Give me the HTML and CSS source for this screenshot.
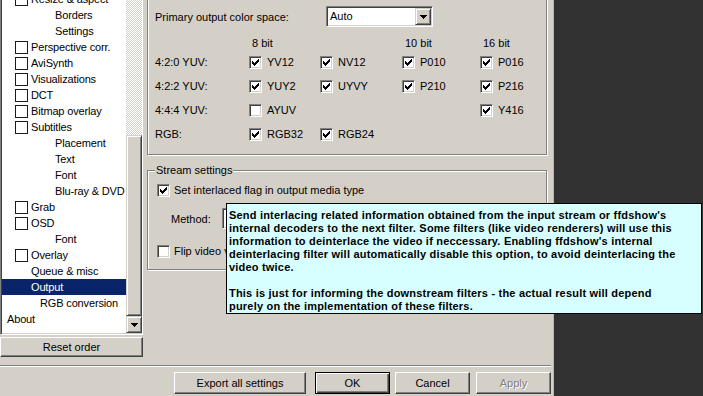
FILE: index.html
```html
<!DOCTYPE html>
<html lang="en">
<head>
    <meta charset="UTF-8">
    <meta name="viewport" content="width=device-width, initial-scale=1.0">
    <title>ffdshow video decoder configuration - Output</title>
    <link rel="stylesheet" href="styles.css">
</head>
<body>
    <div class="dialog">
        <div class="main">
            <div class="sidebar">
                <div class="tree">
                    <ul class="tree-list">
                        <li class="item check"><span class="box"></span>Resize &amp; aspect</li>
                        <li class="item sub">Borders</li>
                        <li class="item sub">Settings</li>
                        <li class="item check"><span class="box"></span>Perspective corr.</li>
                        <li class="item check"><span class="box"></span>AviSynth</li>
                        <li class="item check"><span class="box"></span>Visualizations</li>
                        <li class="item check"><span class="box"></span>DCT</li>
                        <li class="item check"><span class="box"></span>Bitmap overlay</li>
                        <li class="item check"><span class="box"></span>Subtitles</li>
                        <li class="item sub">Placement</li>
                        <li class="item sub">Text</li>
                        <li class="item sub">Font</li>
                        <li class="item sub">Blu-ray &amp; DVD</li>
                        <li class="item check"><span class="box"></span>Grab</li>
                        <li class="item check"><span class="box"></span>OSD</li>
                        <li class="item sub">Font</li>
                        <li class="item check"><span class="box"></span>Overlay</li>
                        <li class="item plain">Queue &amp; misc</li>
                        <li class="item plain selected">Output</li>
                        <li class="item sub2">RGB conversion</li>
                        <li class="item root">About</li>
                    </ul>
                    <div class="scrollbar">
                        <div class="track"><div class="thumb"></div></div>
                        <div class="arrow">
                            <svg width="7" height="4" viewBox="0 0 7 4" shape-rendering="crispEdges"><path d="M0 0h7v1h-1v1h-1v1h-1v1h-1v-1h-1v-1h-1v-1h-1z"/></svg>
                        </div>
                    </div>
                </div>
                <button class="btn reset">Reset order</button>
            </div>

            <div class="pages">
                <div class="group formats">
                    <div class="primary">
                        <span class="primary-label">Primary output color space:</span>
                        <div class="combo">
                            <span class="combo-text">Auto</span>
                            <span class="combo-btn">
                                <svg width="7" height="4" viewBox="0 0 7 4" shape-rendering="crispEdges"><path d="M0 0h7v1h-1v1h-1v1h-1v1h-1v-1h-1v-1h-1v-1h-1z"/></svg>
                            </span>
                        </div>
                    </div>

                    <div class="format-grid">
                        <span></span>
                        <span class="col-head">8 bit</span>
                        <span></span>
                        <span class="col-head">10 bit</span>
                        <span class="col-head">16 bit</span>

                        <span class="row-label">4:2:0 YUV:</span>
                        <label class="opt"><span class="cb"><svg class="tick" viewBox="0 0 7 7"><path d="M6 0h1v1h-1zM5 1h2v1h-2zM0 2h1v1h-1zM4 2h3v1h-3zM0 3h2v1h-2zM3 3h3v1h-3zM0 4h5v1h-5zM1 5h3v1h-3zM2 6h1v1h-1z"/></svg></span>YV12</label>
                        <label class="opt"><span class="cb"><svg class="tick" viewBox="0 0 7 7"><path d="M6 0h1v1h-1zM5 1h2v1h-2zM0 2h1v1h-1zM4 2h3v1h-3zM0 3h2v1h-2zM3 3h3v1h-3zM0 4h5v1h-5zM1 5h3v1h-3zM2 6h1v1h-1z"/></svg></span>NV12</label>
                        <label class="opt"><span class="cb"><svg class="tick" viewBox="0 0 7 7"><path d="M6 0h1v1h-1zM5 1h2v1h-2zM0 2h1v1h-1zM4 2h3v1h-3zM0 3h2v1h-2zM3 3h3v1h-3zM0 4h5v1h-5zM1 5h3v1h-3zM2 6h1v1h-1z"/></svg></span>P010</label>
                        <label class="opt"><span class="cb"><svg class="tick" viewBox="0 0 7 7"><path d="M6 0h1v1h-1zM5 1h2v1h-2zM0 2h1v1h-1zM4 2h3v1h-3zM0 3h2v1h-2zM3 3h3v1h-3zM0 4h5v1h-5zM1 5h3v1h-3zM2 6h1v1h-1z"/></svg></span>P016</label>

                        <span class="row-label">4:2:2 YUV:</span>
                        <label class="opt"><span class="cb"><svg class="tick" viewBox="0 0 7 7"><path d="M6 0h1v1h-1zM5 1h2v1h-2zM0 2h1v1h-1zM4 2h3v1h-3zM0 3h2v1h-2zM3 3h3v1h-3zM0 4h5v1h-5zM1 5h3v1h-3zM2 6h1v1h-1z"/></svg></span>YUY2</label>
                        <label class="opt"><span class="cb"><svg class="tick" viewBox="0 0 7 7"><path d="M6 0h1v1h-1zM5 1h2v1h-2zM0 2h1v1h-1zM4 2h3v1h-3zM0 3h2v1h-2zM3 3h3v1h-3zM0 4h5v1h-5zM1 5h3v1h-3zM2 6h1v1h-1z"/></svg></span>UYVY</label>
                        <label class="opt"><span class="cb"><svg class="tick" viewBox="0 0 7 7"><path d="M6 0h1v1h-1zM5 1h2v1h-2zM0 2h1v1h-1zM4 2h3v1h-3zM0 3h2v1h-2zM3 3h3v1h-3zM0 4h5v1h-5zM1 5h3v1h-3zM2 6h1v1h-1z"/></svg></span>P210</label>
                        <label class="opt"><span class="cb"><svg class="tick" viewBox="0 0 7 7"><path d="M6 0h1v1h-1zM5 1h2v1h-2zM0 2h1v1h-1zM4 2h3v1h-3zM0 3h2v1h-2zM3 3h3v1h-3zM0 4h5v1h-5zM1 5h3v1h-3zM2 6h1v1h-1z"/></svg></span>P216</label>

                        <span class="row-label">4:4:4 YUV:</span>
                        <label class="opt"><span class="cb"></span>AYUV</label>
                        <span></span>
                        <span></span>
                        <label class="opt"><span class="cb"><svg class="tick" viewBox="0 0 7 7"><path d="M6 0h1v1h-1zM5 1h2v1h-2zM0 2h1v1h-1zM4 2h3v1h-3zM0 3h2v1h-2zM3 3h3v1h-3zM0 4h5v1h-5zM1 5h3v1h-3zM2 6h1v1h-1z"/></svg></span>Y416</label>

                        <span class="row-label">RGB:</span>
                        <label class="opt"><span class="cb"><svg class="tick" viewBox="0 0 7 7"><path d="M6 0h1v1h-1zM5 1h2v1h-2zM0 2h1v1h-1zM4 2h3v1h-3zM0 3h2v1h-2zM3 3h3v1h-3zM0 4h5v1h-5zM1 5h3v1h-3zM2 6h1v1h-1z"/></svg></span>RGB32</label>
                        <label class="opt"><span class="cb"><svg class="tick" viewBox="0 0 7 7"><path d="M6 0h1v1h-1zM5 1h2v1h-2zM0 2h1v1h-1zM4 2h3v1h-3zM0 3h2v1h-2zM3 3h3v1h-3zM0 4h5v1h-5zM1 5h3v1h-3zM2 6h1v1h-1z"/></svg></span>RGB24</label>
                    </div>
                </div>

                <div class="group stream">
                    <span class="group-title">Stream settings</span>
                    <label class="opt-row first"><span class="cb"><svg class="tick" viewBox="0 0 7 7"><path d="M6 0h1v1h-1zM5 1h2v1h-2zM0 2h1v1h-1zM4 2h3v1h-3zM0 3h2v1h-2zM3 3h3v1h-3zM0 4h5v1h-5zM1 5h3v1h-3zM2 6h1v1h-1z"/></svg></span>Set interlaced flag in output media type</label>
                    <div class="method-row">
                        <span class="method-label">Method:</span>
                        <div class="combo method">
                            <span class="combo-text"></span>
                            <span class="combo-btn">
                                <svg width="7" height="4" viewBox="0 0 7 4" shape-rendering="crispEdges"><path d="M0 0h7v1h-1v1h-1v1h-1v1h-1v-1h-1v-1h-1v-1h-1z"/></svg>
                            </span>
                        </div>
                    </div>
                    <label class="opt-row last"><span class="cb"></span>Flip video vertically</label>
                </div>
            </div>
        </div>

        <div class="separator"></div>

        <div class="buttons">
            <button class="btn export">Export all settings</button>
            <button class="btn ok">OK</button>
            <button class="btn cancel">Cancel</button>
            <button class="btn apply" disabled>Apply</button>
        </div>
    </div>

    <!-- tooltip over "Set interlaced flag" -->
    <div class="tooltip">Send interlacing related information obtained from the input stream or ffdshow's<br>internal decoders to the next filter. Some filters (like video renderers) will use this<br>information to deinterlace the video if neccessary. Enabling ffdshow's internal<br>deinterlacing filter will automatically disable this option, to avoid deinterlacing the<br>video twice.<br><br>This is just for informing the downstream filters - the actual result will depend<br>purely on the implementation of these filters.</div>
</body>
</html>
```

FILE: styles.css
```css
body {
    margin: 0;
    width: 703px;
    height: 396px;
    overflow: hidden;
    position: relative;
    background-color: #323232;
    font-family: "Liberation Sans", Arial, sans-serif;
    font-size: 11px;
    color: #000;
}
.dialog {
    width: 553px;
    height: 396px;
    background-color: #d4d0c8;
    border-right: 1px solid #bcb8b0;
    display: flex;
    flex-direction: column;
    overflow: hidden;
}
.main {
    display: flex;
    height: 365px;
}

/* left tree */
.sidebar {
    width: 143px;
    display: flex;
    flex-direction: column;
}
.tree {
    height: 335px;
    box-sizing: border-box;
    display: flex;
    background-color: #fff;
    border: 1px solid;
    border-top: 0;
    border-color: #808080 #fff #fff #808080;
    box-shadow: inset 1px 0 #404040, inset 0 -1px #d4d0c8;
    overflow: hidden;
}
.tree-list {
    list-style: none;
    margin: -9px 0 0 1px;
    padding: 0;
    flex: 1;
    min-width: 0;
    letter-spacing: -0.15px;
}
.item {
    height: 16px;
    line-height: 16px;
    display: flex;
    align-items: center;
    white-space: nowrap;
}
.item.check { padding-left: 13px; }
.item.sub { padding-left: 53px; }
.item.plain { padding-left: 29px; }
.item.sub2 { padding-left: 38px; }
.item.root { padding-left: 5px; }
.item.selected {
    background-color: #0a246a;
    color: #fff;
}
.box {
    width: 13px;
    height: 13px;
    box-sizing: border-box;
    border: 1px solid #1c1c1c;
    background-color: #fff;
    margin-right: 3px;
}
.scrollbar {
    width: 16px;
    display: flex;
    flex-direction: column;
    margin-bottom: 1px;
}
.track {
    flex: 1;
    display: flex;
    flex-direction: column;
    background: repeating-conic-gradient(#d4d0c8 0 25%, #fff 0 50%) 0 0 / 2px 2px;
}
.thumb, .arrow, .combo-btn {
    box-sizing: border-box;
    background-color: #d4d0c8;
    border: 1px solid;
    border-color: #d4d0c8 #404040 #404040 #d4d0c8;
    box-shadow: inset 1px 1px #fff, inset -1px -1px #808080;
}
.thumb {
    margin-top: 135px;
    flex: 1;
}
.arrow {
    height: 17px;
    display: flex;
    align-items: center;
    justify-content: center;
}

/* buttons */
.btn {
    box-sizing: border-box;
    height: 22px;
    padding: 0;
    font-family: inherit;
    font-size: 11px;
    color: #000;
    background-color: #d4d0c8;
    border: 1px solid;
    border-color: #fff #404040 #404040 #fff;
    box-shadow: inset -1px -1px #808080;
}
.reset {
    margin-top: 2px;
    width: 143px;
    height: 20px;
}
.btn.ok {
    border-color: #000;
    box-shadow: inset 1px 1px #fff, inset -1px -1px #404040, inset -2px -2px #808080;
}
.btn.apply {
    color: #808080;
    text-shadow: 1px 1px #fff;
}

/* right pages */
.pages {
    margin-left: 4px;
    width: 400px;
}
.group {
    box-sizing: border-box;
    border: 1px solid #808080;
    box-shadow: inset 1px 1px #fff, 1px 1px #fff;
}
.formats {
    margin-top: -10px;
    padding: 15px 7px 8px;
}
.primary {
    display: flex;
    align-items: center;
    height: 21px;
}
.primary-label {
    width: 171px;
}
.combo {
    width: 107px;
    height: 21px;
    box-sizing: border-box;
    padding: 1px;
    display: flex;
    background-color: #fff;
    border: 1px solid;
    border-color: #808080 #fff #fff #808080;
    box-shadow: inset 1px 1px #404040, inset -1px -1px #d4d0c8;
}
.combo-text {
    flex: 1;
    padding-left: 2px;
    line-height: 17px;
}
.combo-btn {
    width: 16px;
    height: 17px;
    display: flex;
    align-items: center;
    justify-content: center;
}
.format-grid {
    display: grid;
    grid-template-columns: 94px 71px 82px 78px 1fr;
    grid-template-rows: 14px repeat(4, 24px);
    align-items: center;
    margin-top: 9px;
}
.col-head {
    padding-left: 3px;
}
.opt, .opt-row {
    display: flex;
    align-items: center;
    gap: 5px;
}
.cb {
    width: 13px;
    height: 13px;
    box-sizing: border-box;
    flex-shrink: 0;
    display: flex;
    align-items: center;
    justify-content: center;
    background-color: #fff;
    border: 1px solid;
    border-color: #808080 #fff #fff #808080;
    box-shadow: inset 1px 1px #404040, inset -1px -1px #d4d0c8;
}
.tick {
    width: 7px;
    height: 7px;
    shape-rendering: crispEdges;
}

.stream {
    margin-top: 15px;
    padding: 0 7px 10px;
    display: flex;
    flex-direction: column;
    align-items: flex-start;
}
.group-title {
    margin-top: -7px;
    line-height: 13px;
    padding: 0 1px;
    background-color: #d4d0c8;
}
.opt-row {
    height: 16px;
    margin-left: 2px;
    gap: 4px;
    white-space: nowrap;
}
.opt-row.first { margin-top: 5px; }
.opt-row.last { margin-top: 14px; }
.method-row {
    display: flex;
    align-items: center;
    margin-top: 10px;
    padding-left: 16px;
}
.method-label {
    width: 51px;
}
.combo.method {
    width: 220px;
}

.separator {
    width: 551px;
    border-top: 1px solid #808080;
    border-bottom: 1px solid #fff;
}
.buttons {
    display: flex;
    justify-content: flex-end;
    padding: 5px 2px 0 0;
}
.export { width: 132px; }
.ok { width: 75px; margin-left: 9px; }
.cancel { width: 75px; margin-left: 5px; }
.apply { width: 75px; margin-left: 6px; }

/* tooltip */
.tooltip {
    position: absolute;
    left: 226px;
    top: 203px;
    width: 476px;
    height: 111px;
    box-sizing: border-box;
    padding: 5px 0 0 2px;
    background-color: #d7ffff;
    border: 1px solid #000;
    font-weight: bold;
    line-height: 13px;
    letter-spacing: 0.2px;
    white-space: nowrap;
    overflow: hidden;
}
```
